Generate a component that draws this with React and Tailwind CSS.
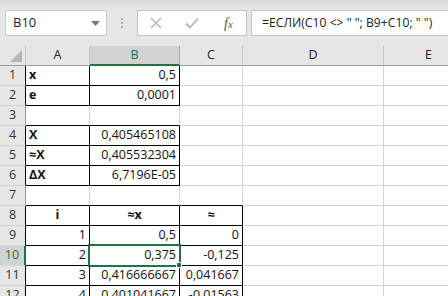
import React from 'react';

const W = [64, 90, 63, 141, 90];
const G = 'border-r-[#d4d4d4]';
const GB = 'border-b-[#d4d4d4]';

function Cell({ w, text, align = 'left', bold, r, b }) {
  const al = align === 'right' ? 'justify-end pr-[3px]' : align === 'center' ? 'justify-center' : 'justify-start pl-[3px]';
  return (
    <div
      style={{ width: w }}
      className={`h-[20px] shrink-0 flex items-center border-r border-b bg-white text-[12.5px] text-[#111] whitespace-nowrap overflow-hidden ${al} ${bold ? 'font-bold' : ''} ${r ? 'border-r-black' : G} ${b ? 'border-b-black' : GB}`}
    >
      {text}
    </div>
  );
}

const rows = [
  { n: 1, hb: true, c: [{ t: 'x', bold: true, r: 1, b: 1 }, { t: '0,5', a: 'right', r: 1, b: 1 }, {}, {}, {}] },
  { n: 2, hb: true, c: [{ t: 'e', bold: true, r: 1, b: 1 }, { t: '0,0001', a: 'right', r: 1, b: 1 }, {}, {}, {}] },
  { n: 3, c: [{ b: 1 }, { b: 1 }, {}, {}, {}] },
  { n: 4, hb: true, c: [{ t: 'X', bold: true, r: 1, b: 1 }, { t: '0,405465108', a: 'right', r: 1, b: 1 }, {}, {}, {}] },
  { n: 5, hb: true, c: [{ t: '≈X', bold: true, r: 1, b: 1 }, { t: '0,405532304', a: 'right', r: 1, b: 1 }, {}, {}, {}] },
  { n: 6, hb: true, c: [{ t: 'ΔX', bold: true, r: 1, b: 1 }, { t: '6,7196E-05', a: 'right', r: 1, b: 1 }, {}, {}, {}] },
  { n: 7, c: [{ b: 1 }, { b: 1 }, { b: 1 }, {}, {}] },
  { n: 8, hb: true, c: [{ t: 'i', bold: true, a: 'center', r: 1, b: 1 }, { t: '≈x', bold: true, a: 'center', r: 1, b: 1 }, { t: '≈', bold: true, a: 'center', r: 1, b: 1 }, {}, {}] },
  { n: 9, hb: true, c: [{ t: '1', a: 'right', r: 1, b: 1 }, { t: '0,5', a: 'right', r: 1, b: 1 }, { t: '0', a: 'right', r: 1, b: 1 }, {}, {}] },
  { n: 10, sel: true, c: [{ t: '2', a: 'right', r: 1, b: 1 }, { t: '0,375', a: 'right', r: 1, b: 1 }, { t: '-0,125', a: 'right', r: 1, b: 1 }, {}, {}] },
  { n: 11, hb: true, c: [{ t: '3', a: 'right', r: 1, b: 1 }, { t: '0,416666667', a: 'right', r: 1, b: 1 }, { t: '0,041667', a: 'right', r: 1, b: 1 }, {}, {}] },
  { n: 12, hb: true, c: [{ t: '4', a: 'right', r: 1, b: 1 }, { t: '0,401041667', a: 'right', r: 1, b: 1 }, { t: '-0,01563', a: 'right', r: 1, b: 1 }, {}, {}] },
];

export default function App() {
  return (
    <div className="relative w-[448px] h-[296px] overflow-hidden bg-[#e6e6e6] font-['Open_Sans',sans-serif]">
      {/* toolbar */}
      <div className="h-[46px] flex items-start pt-[10px] pl-[5px] bg-[linear-gradient(#d9d9d9,#e6e6e6_7px)]">
        <div className="w-[102px] h-[26px] bg-white border border-[#c6c6c6] flex items-center justify-between pl-[7px] pr-[6px] text-[13px] text-[#222]">
          <span>B10</span>
          <svg width="9" height="5" viewBox="0 0 9 5"><path d="M0 0H9L4.5 5Z" fill="#7a7a7a" /></svg>
        </div>
        <div className="w-[30px] h-[26px] flex flex-col items-center justify-center gap-[2px]">
          <div className="w-[2px] h-[2px] bg-[#b0b0b0]" />
          <div className="w-[2px] h-[2px] bg-[#b0b0b0]" />
          <div className="w-[2px] h-[2px] bg-[#b0b0b0]" />
        </div>
        <div className="w-[110px] h-[26px] bg-white border border-[#c6c6c6] flex items-center">
          <svg className="ml-[12px]" width="12" height="12" viewBox="0 0 12 12"><path d="M1 1L11 11M11 1L1 11" stroke="#b4b4b4" strokeWidth="1.4" /></svg>
          <svg className="ml-[23px]" width="14" height="12" viewBox="0 0 14 12"><path d="M1 6.5L5 10.5L13 1.5" stroke="#b4b4b4" strokeWidth="1.8" fill="none" /></svg>
          <span className="ml-[25px] text-[14px] italic text-[#555] font-['Liberation_Serif',serif]">f<span className="text-[11px]">x</span></span>
        </div>
        <div className="ml-[4px] flex-1 h-[26px] bg-white border border-r-0 border-[#c6c6c6] flex items-center pl-[10px] text-[12.2px] text-[#222] whitespace-nowrap overflow-hidden">
          =ЕСЛИ(C10 &lt;&gt; " "; B9+C10; " ")
        </div>
      </div>

      {/* column header */}
      <div className="flex h-[20px]">
        <div className="w-[26px] shrink-0 h-[20px] border-r border-b border-r-[#c8c8c8] border-b-[#9b9b9b] relative">
          <svg className="absolute right-[3px] bottom-[3px]" width="12" height="12" viewBox="0 0 12 12"><path d="M12 0V12H0Z" fill="#b5b5b5" /></svg>
        </div>
        {['A', 'B', 'C', 'D', 'E'].map((c, i) => (
          <div
            key={c}
            style={{ width: W[i] }}
            className={`shrink-0 h-[20px] flex items-center justify-center border-r text-[12.5px] ${c === 'B' ? 'bg-[#d2d2d2] text-[#217346] border-b-2 border-b-[#217346] border-r-[#ababab]' : 'text-[#222] border-b border-b-[#9b9b9b] border-r-[#c8c8c8]'}`}
          >
            {c}
          </div>
        ))}
      </div>

      {/* rows */}
      {rows.map((row) => (
        <div key={row.n} className="flex h-[20px]">
          <div
            className={`w-[26px] shrink-0 h-[20px] flex items-center justify-center border-b border-b-[#d4d4d4] text-[12.5px] ${row.sel ? 'bg-[#d2d2d2] text-[#217346] border-r-2 border-r-[#217346]' : `text-[#333] border-r ${row.hb ? 'border-r-black' : 'border-r-[#9b9b9b]'}`}`}
          >
            {row.n}
          </div>
          {row.c.map((c, i) => (
            <Cell key={i} w={W[i]} text={c.t} align={c.a} bold={c.bold} r={c.r} b={c.b} />
          ))}
        </div>
      ))}

      {/* selection */}
      <div className="absolute left-[88px] top-[244px] w-[93px] h-[23px] border-2 border-[#217346] pointer-events-none" />
      <div className="absolute left-[176px] top-[262px] w-[6px] h-[6px] bg-[#217346] border border-white" />
    </div>
  );
}
